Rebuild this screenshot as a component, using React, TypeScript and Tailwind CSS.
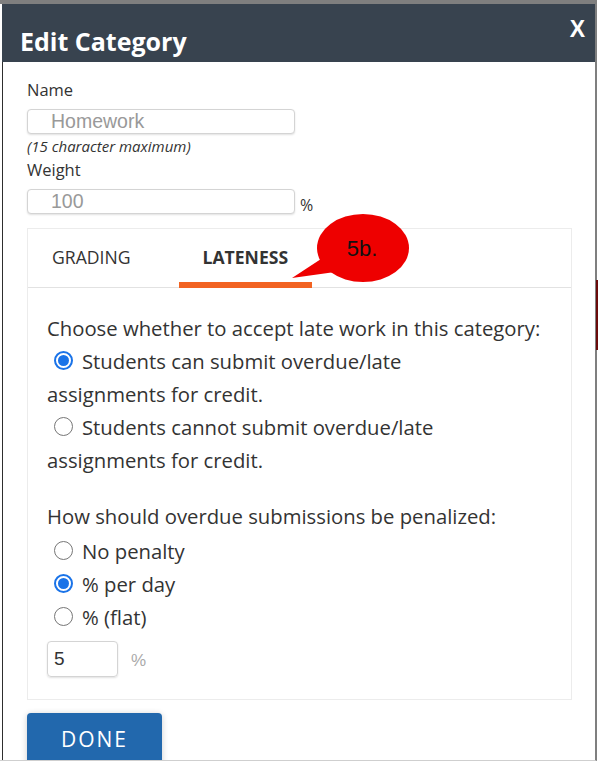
import type { ReactNode } from 'react';

const font = { fontFamily: '"Open Sans", "Noto Sans", sans-serif' };
const arial = { fontFamily: '"Liberation Sans", Arial, sans-serif' };

function Radio({ checked }: { checked?: boolean }) {
  return (
    <span
      className={
        'inline-flex items-center justify-center align-middle relative -top-[3px] ml-[7px] mr-[9px] w-[19px] h-[19px] rounded-full bg-white ' +
        (checked ? 'border-[2px] border-[#1a73e8]' : 'border-[1.5px] border-[#767676]')
      }
    >
      {checked && <span className="w-[11px] h-[11px] rounded-full bg-[#1a73e8]" />}
    </span>
  );
}

function Line({ children }: { children: ReactNode }) {
  return <div className="leading-[33px]">{children}</div>;
}

function TextBox({ value, className }: { value: string; className?: string }) {
  return (
    <div
      className={
        'h-[25px] w-[268px] rounded-[4px] border border-[#d4d4d4] bg-white shadow-[0_1px_2px_rgba(0,0,0,0.12)] flex items-center pl-[23px] text-[19.5px] text-[#999] ' +
        (className ?? '')
      }
      style={arial}
    >
      {value}
    </div>
  );
}

export default function App() {
  return (
    <div className="relative w-[599px] h-[770px] bg-white overflow-hidden" style={font}>
      <div className="w-[597px] h-[761px] border-t-[4px] border-t-[#7f7f7f] border-r-[2px] border-r-[#7f7f7f] border-b border-b-[#cfcfcf] pl-[2px] flex flex-col">
        {/* header */}
        <div className="h-[58px] shrink-0 bg-[#38434f] flex items-start justify-between">
          <h1 className="text-white font-bold text-[25px] leading-none mt-[25px] ml-[18px]">Edit Category</h1>
          <span className="text-white font-bold text-[23px] leading-none mt-[14px] mr-[10px]" style={arial}>
            X
          </span>
        </div>

        {/* body */}
        <div className="flex-1 border-l border-l-[#2e2e2e] pl-[24px] pt-[18px] text-[#333] overflow-hidden">
          <div className="text-[16.5px] leading-[20px]">Name</div>
          <TextBox value="Homework" className="mt-[9px]" />
          <div className="mt-[4px] text-[15px] leading-[17px] italic">(15 character maximum)</div>
          <div className="mt-[5px] text-[16.5px] leading-[20px]">Weight</div>
          <div className="mt-[9px] flex items-end gap-[5px]">
            <TextBox value="100" />
            <span className="text-[16px] leading-[20px] -mb-[1px]">%</span>
          </div>

          {/* tab panel */}
          <div className="mt-[14px] w-[545px] border border-[#ececec]">
            <div className="flex gap-[24px] h-[59px] border-b border-b-[#e2e2e2] text-[17.6px]">
              <div className="px-[24px] flex items-center pb-[2px]">GRADING</div>
              <div className="px-[24px] flex items-center pb-[2px] font-bold border-b-[6px] border-b-[#f26322] -mb-[1px] pt-[6px]">
                LATENESS
              </div>
            </div>
            <div className="pl-[19px] pt-[24px] pb-[22px] text-[20.3px]">
              <Line>Choose whether to accept late work in this category:</Line>
              <Line>
                <Radio checked />
                Students can submit overdue/late
                <br />
                assignments for credit.
              </Line>
              <Line>
                <Radio />
                Students cannot submit overdue/late
                <br />
                assignments for credit.
              </Line>
              <div className="mt-[23px]">
                <Line>How should overdue submissions be penalized:</Line>
                <div className="pt-[2px]">
                  <Line>
                    <Radio />
                    No penalty
                  </Line>
                  <Line>
                    <Radio checked />% per day
                  </Line>
                  <Line>
                    <Radio />% (flat)
                  </Line>
                </div>
              </div>
              <div className="mt-[7px] flex items-center gap-[13px]">
                <div
                  className="w-[71px] h-[36px] rounded-[4px] border border-[#d4d4d4] shadow-[0_1px_2px_rgba(0,0,0,0.12)] flex items-center pl-[6px] text-[19px] text-[#333]"
                  style={arial}
                >
                  5
                </div>
                <span className="text-[17px] text-[#aaa] mt-[4px]" style={arial}>
                  %
                </span>
              </div>
            </div>
          </div>

          <button className="mt-[13px] w-[135px] h-[60px] rounded-[4px] bg-[#2268ad] text-white text-[21px] tracking-[2px] flex justify-center pt-[11px] shadow-[0_1px_6px_rgba(0,0,0,0.2)]">
            DONE
          </button>
        </div>
      </div>

      {/* callout 5b. */}
      <svg className="absolute left-[285px] top-[210px]" width="130" height="80" viewBox="0 0 130 80">
        <path d="M7 68 L36 49 L50 62 Z" fill="#ee0000" />
        <ellipse cx="78" cy="38" rx="46" ry="34" fill="#ee0000" />
        <text x="77" y="46" textAnchor="middle" fontSize="22" fill="#111" style={arial}>
          5b.
        </text>
      </svg>

      <div className="absolute left-[596px] top-[280px] w-[2px] h-[70px] bg-[#6a0a0a]" />
    </div>
  );
}
